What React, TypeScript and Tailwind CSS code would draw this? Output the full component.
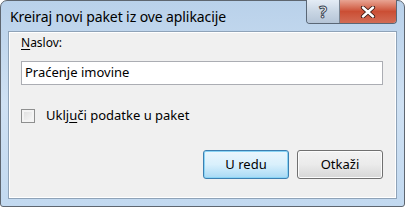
export default function App() {
  return (
    <div className="w-[405px] h-[207px] bg-white" style={{ fontFamily: '"Noto Sans", "Open Sans", sans-serif' }}>
      <div className="relative flex h-full w-full flex-col rounded-t-[7px] rounded-b-[3px] border border-[#5e6670] bg-gradient-to-b from-[#b9d1ea] via-[#cfe1f3] to-[#c2d9f0] px-[7px] pb-[7px]">
        {/* title bar */}
        <div className="flex h-[30px] items-center pl-[2px] pt-[1px]">
          <span className="text-[14px] tracking-[-0.1px] text-black">Kreiraj novi paket iz ove aplikacije</span>
        </div>

        {/* caption buttons */}
        <div className="absolute right-[7px] top-[-1px] flex h-[24px] overflow-hidden rounded-b-[4px] border border-t-0 border-[#5a6776]">
          <div className="flex w-[33px] items-center justify-center border-r border-[#7a8592] bg-gradient-to-b from-[#e4ecf5] via-[#c9d6e4] to-[#b5c5d7]">
            <span className="text-[16px] font-bold leading-none text-white" style={{ WebkitTextStroke: '1px #3b4654' }}>?</span>
          </div>
          <div className="flex w-[56px] items-center justify-center bg-gradient-to-b from-[#e8a493] via-[#cb4e34] to-[#d26c55]">
            <svg width="16" height="12" viewBox="0 0 16 12">
              <path d="M3 1.5 L13 10.5 M13 1.5 L3 10.5" stroke="#3a1a14" strokeWidth="4.2" strokeLinecap="round" />
              <path d="M3 1.5 L13 10.5 M13 1.5 L3 10.5" stroke="#ffffff" strokeWidth="2.4" strokeLinecap="round" />
            </svg>
          </div>
        </div>

        {/* client area */}
        <div className="flex flex-1 flex-col border border-[#8fa3b8] bg-[#f0f0f0] pl-[12px] pr-[13px] text-[12px] text-black shadow-[inset_0_0_0_1px_#ffffff]">
          <div className="mt-[3px] h-[16px] leading-[16px]">
            <span className="underline underline-offset-[2px]">N</span>aslov:
          </div>
          <div className="mt-[10px] flex h-[24px] items-center border border-[#abadb3] bg-white pl-[3px] text-[13px]">
            Praćenje imovine
          </div>
          <label className="mt-[21px] flex items-center">
            <span className="h-[14px] w-[14px] border border-[#8e8f8f] bg-gradient-to-br from-[#dcdcdc] to-[#fbfbfb] shadow-[inset_0_0_0_2px_#f4f4f4]" />
            <span className="ml-[11px] text-[13px]">
              Uklj<span className="underline underline-offset-[2px]">u</span>či podatke u paket
            </span>
          </label>
          <div className="mt-auto mb-[19px] flex justify-end gap-[8px]">
            <button className="h-[29px] w-[86px] rounded-[3px] border border-[#3c7fb1] bg-gradient-to-b from-[#eaf6fd] via-[#d9f0fc] to-[#a7d9f5] text-[13px] shadow-[inset_0_0_0_1px_#8ad4f5]">
              U redu
            </button>
            <button className="h-[29px] w-[86px] rounded-[3px] border border-[#707070] bg-gradient-to-b from-[#f2f2f2] via-[#ebebeb] to-[#d6d6d6] text-[13px] shadow-[inset_0_0_0_1px_#fcfcfc]">
              Otkaži
            </button>
          </div>
        </div>
      </div>
    </div>
  );
}
